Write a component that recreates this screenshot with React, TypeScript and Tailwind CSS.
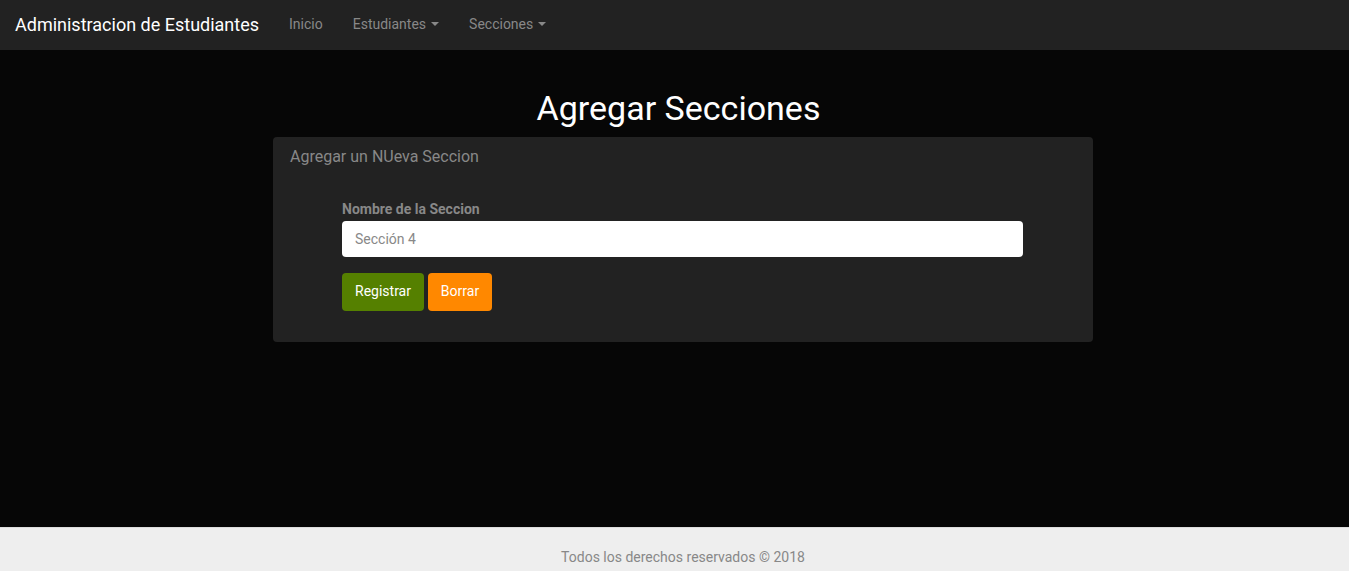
import React from "react";

function Caret() {
  return (
    <span className="ml-[5px] inline-block h-0 w-0 border-x-[4px] border-t-[4px] border-x-transparent border-t-[#888] align-middle" />
  );
}

export default function App() {
  return (
    <div className="min-h-screen bg-[#060606]" style={{ fontFamily: "Roboto, 'Liberation Sans', sans-serif" }}>
      <nav className="flex h-[50px] items-center bg-[#222]">
        <div className="pl-[15px] text-[18px] leading-[20px] text-white">Administracion de Estudiantes</div>
        <div className="-mt-[2px] ml-[30px] flex items-center text-[14px] text-[#888]">
          <span>Inicio</span>
          <span className="ml-[30px] flex items-center">Estudiantes<Caret /></span>
          <span className="ml-[30px] flex items-center">Secciones<Caret /></span>
        </div>
      </nav>
      <main className="h-[477px] pt-[39px]">
        <h1 className="pl-[8px] text-center text-[34px] leading-[38px] text-white">Agregar Secciones</h1>
        <div className="ml-[273px] mt-[10px] h-[205px] w-[820px] rounded-[4px] bg-[#222]">
          <div className="pl-[17px] pt-[9px] text-[16px] leading-[22px] text-[#888]">Agregar un NUeva Seccion</div>
          <div className="px-[69px] pt-[31px]">
            <label className="block text-[14px] font-bold leading-[20px] text-[#888]">Nombre de la Seccion</label>
            <input
              className="mt-[2px] block h-[36px] w-[681px] rounded-[4px] bg-white px-[13px] text-[14px] text-[#555] placeholder:text-[#888] outline-none"
              placeholder="Sección 4"
            />
            <div className="mt-[16px] flex gap-[4px]">
              <button className="h-[38px] w-[82px] rounded-[4px] bg-[#558000] pb-[2px] text-[14px] text-white">Registrar</button>
              <button className="h-[38px] w-[64px] rounded-[4px] bg-[#ff8800] pb-[2px] text-[14px] text-white">Borrar</button>
            </div>
          </div>
        </div>
      </main>
      <footer className="h-[44px] border-t border-[#ddd] bg-[#eee] pt-[19px] pl-[17px] text-center text-[14px] leading-[20px] text-[#888]">
        Todos los derechos reservados © 2018
      </footer>
    </div>
  );
}
